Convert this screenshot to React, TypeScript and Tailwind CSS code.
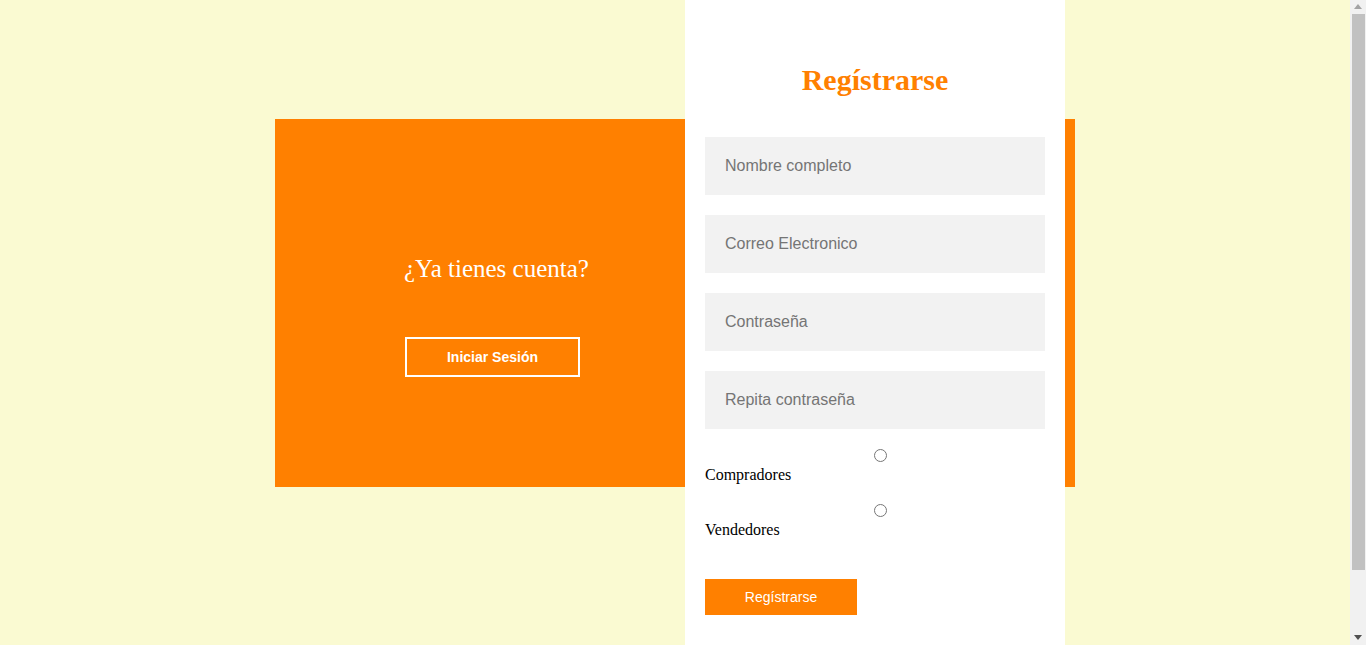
import { useState } from 'react';

const fields = ['Nombre completo', 'Correo Electronico', 'Contraseña', 'Repita contraseña'];

function Scrollbar() {
  return (
    <div className="sticky top-0 flex h-[645px] w-[16px] shrink-0 flex-col items-center bg-[#f1f1f1]">
      <svg width="16" height="14" viewBox="0 0 16 14" className="shrink-0">
        <path d="M4 9 L8 4 L12 9 Z" fill="#a3a3a3" />
      </svg>
      <div className="w-[13px] flex-1 pb-[59px]">
        <div className="h-full bg-[#c1c1c1]" />
      </div>
      <svg width="16" height="16" viewBox="0 0 16 16" className="shrink-0">
        <path d="M4 6 L8 11 L12 6 Z" fill="#505050" />
      </svg>
    </div>
  );
}

export default function App() {
  const [role, setRole] = useState('');

  return (
    <div className="flex bg-[#fafad2] font-['Liberation_Serif',serif]">
      <div className="min-h-[709px] flex-1 pt-[119px]">
        <div className="mx-auto flex h-[368px] w-[800px] bg-[#ff8000]">
          {/* Left: login prompt */}
          <div className="w-[410px] shrink-0 pl-[129px] pt-[135px]">
            <h3 className="text-[25px] leading-[29px] text-white">¿Ya tienes cuenta?</h3>
            <button className="ml-px mt-[54px] h-[40px] w-[175px] border-2 border-white font-['Liberation_Sans',Arial,sans-serif] text-[14px] font-bold text-white">
              Iniciar Sesión
            </button>
          </div>

          {/* Right: register form */}
          <div className="-mt-[119px] h-[690px] w-[380px] shrink-0 bg-white px-5 pt-[63px]">
            <h2 className="text-center text-[30px] font-bold leading-[34px] text-[#ff8000]">Regístrarse</h2>
            <form className="mt-[40px] flex flex-col gap-5" onSubmit={(e) => e.preventDefault()}>
              {fields.map((f) => (
                <input
                  key={f}
                  type={f.startsWith('Contra') || f.startsWith('Repita') ? 'password' : 'text'}
                  placeholder={f}
                  className="h-[58px] w-full bg-[#f2f2f2] px-5 font-['Liberation_Sans',Arial,sans-serif] text-[16px] outline-none placeholder:text-[#757575]"
                />
              ))}
            </form>
            <div className="mt-[20px] pl-[169px]">
              <input
                type="radio"
                name="role"
                checked={role === 'comprador'}
                onChange={() => setRole('comprador')}
                className="m-0 block h-[13px] w-[13px]"
              />
            </div>
            <label className="mt-[4px] block text-[16px] leading-[18px] text-black">Compradores</label>
            <div className="mt-[20px] pl-[169px]">
              <input
                type="radio"
                name="role"
                checked={role === 'vendedor'}
                onChange={() => setRole('vendedor')}
                className="m-0 block h-[13px] w-[13px]"
              />
            </div>
            <label className="mt-[4px] block text-[16px] leading-[18px] text-black">Vendedores</label>
            <button className="mt-[40px] h-[36px] w-[152px] bg-[#ff8000] font-['Liberation_Sans',Arial,sans-serif] text-[14px] text-white">
              Regístrarse
            </button>
          </div>
        </div>
      </div>
      <Scrollbar />
    </div>
  );
}
